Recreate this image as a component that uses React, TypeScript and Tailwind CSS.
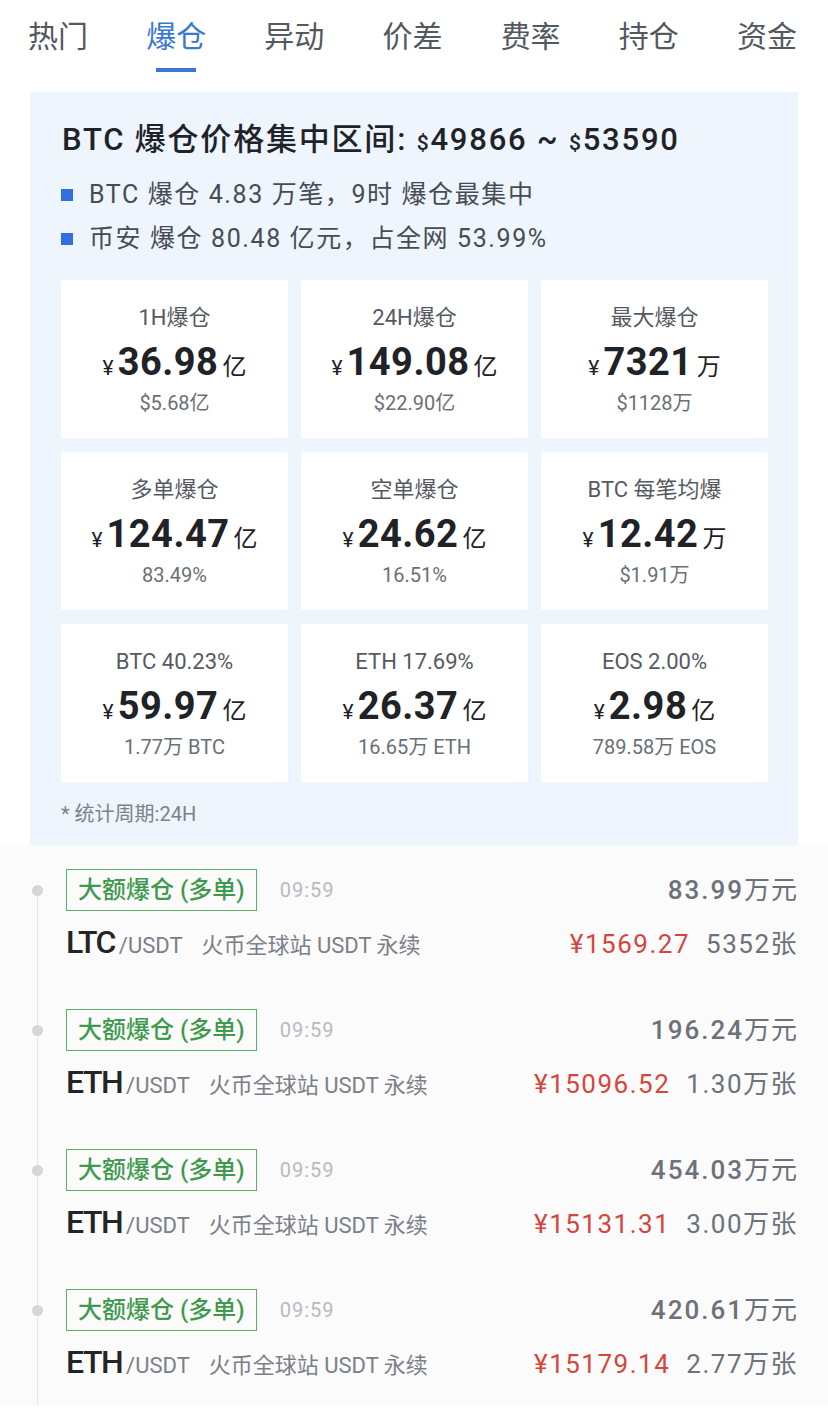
import React from "react";

const FONT = { fontFamily: 'Roboto, "Noto Sans CJK SC", sans-serif' };

const tabs = ["热门", "爆仓", "异动", "价差", "费率", "持仓", "资金"];

type Stat = { label: string; value: string; unit: string; sub: string };

const stats: Stat[] = [
  { label: "1H爆仓", value: "36.98", unit: "亿", sub: "$5.68亿" },
  { label: "24H爆仓", value: "149.08", unit: "亿", sub: "$22.90亿" },
  { label: "最大爆仓", value: "7321", unit: "万", sub: "$1128万" },
  { label: "多单爆仓", value: "124.47", unit: "亿", sub: "83.49%" },
  { label: "空单爆仓", value: "24.62", unit: "亿", sub: "16.51%" },
  { label: "BTC 每笔均爆", value: "12.42", unit: "万", sub: "$1.91万" },
  { label: "BTC 40.23%", value: "59.97", unit: "亿", sub: "1.77万 BTC" },
  { label: "ETH 17.69%", value: "26.37", unit: "亿", sub: "16.65万 ETH" },
  { label: "EOS 2.00%", value: "2.98", unit: "亿", sub: "789.58万 EOS" },
];

const orders = [
  { coin: "LTC", amount: "83.99", price: "¥1569.27", qty: "5352张" },
  { coin: "ETH", amount: "196.24", price: "¥15096.52", qty: "1.30万张" },
  { coin: "ETH", amount: "454.03", price: "¥15131.31", qty: "3.00万张" },
  { coin: "ETH", amount: "420.61", price: "¥15179.14", qty: "2.77万张" },
];

function StatCard({ s }: { s: Stat }) {
  return (
    <div className="h-[158px] bg-white rounded-[2px] flex flex-col items-center pt-[24px]">
      <div className="text-[22px] leading-[28px] text-[#555a62]">{s.label}</div>
      <div className="mt-[8px] h-[44px] flex items-baseline text-[#1f2226]">
        <span className="text-[21px] mr-[4px]">¥</span>
        <span className="text-[38px] leading-[44px] font-bold tracking-[0.5px]">{s.value}</span>
        <span className="text-[24px] ml-[4px]">{s.unit}</span>
      </div>
      <div className="mt-[6px] text-[20px] leading-[26px] text-[#6a6f77]">{s.sub}</div>
    </div>
  );
}

export default function App() {
  return (
    <div className="w-[828px] min-h-[1424px] bg-white overflow-hidden" style={FONT}>
      {/* Tabs */}
      <div className="flex justify-between pl-[28px] pr-[31px] pt-[17px]">
        {tabs.map((t) => {
          const active = t === "爆仓";
          return (
            <div key={t} className="flex flex-col items-center">
              <span
                className={
                  active
                    ? "text-[30px] leading-[40px] text-[#3a78d4]"
                    : "text-[30px] leading-[40px] text-[#54585f]"
                }
              >
                {t}
              </span>
              <span
                className={
                  active
                    ? "mt-[11px] w-[40px] h-[4px] bg-[#3a78d4]"
                    : "mt-[11px] w-[40px] h-[4px]"
                }
              />
            </div>
          );
        })}
      </div>

      {/* Summary */}
      <div className="mx-[30px] mt-[20px] bg-[#eef5fd] pl-[31px] pr-[30px] pt-[28px] pb-[16px]">
        <div className="pl-[1px] text-[31px] leading-[40px] font-medium tracking-[1.8px] text-[#1f2329]">
          BTC 爆仓价格集中区间: <span className="text-[21px]">$</span>49866 ~{" "}
          <span className="text-[21px]">$</span>53590
        </div>
        <div className="mt-[10px]">
          {[
            "BTC 爆仓 4.83 万笔，9时 爆仓最集中",
            "币安 爆仓 80.48 亿元，占全网 53.99%",
          ].map((line) => (
            <div key={line} className="flex items-center h-[44px]">
              <span className="w-[12px] h-[12px] bg-[#2f6fde] mr-[16px]" />
              <span className="text-[25px] tracking-[1.6px] text-[#474c54]">{line}</span>
            </div>
          ))}
        </div>
        <div className="mt-[19px] grid grid-cols-3 gap-x-[13px] gap-y-[14px]">
          {stats.map((s) => (
            <StatCard key={s.label} s={s} />
          ))}
        </div>
        <div className="mt-[17px] text-[20px] leading-[30px] text-[#7d828a]">* 统计周期:24H</div>
      </div>

      {/* Orders */}
      <div className="relative bg-[#fbfbfc]">
        <div className="absolute left-[37px] top-[45px] bottom-0 w-px bg-[#e6e8eb]" />
        {orders.map((o, i) => (
          <div key={i} className="relative pl-[66px] pr-[32px] pt-[24px] pb-[25px]">
            <span className="absolute left-[32px] top-[40px] w-[11px] h-[11px] rounded-full bg-[#d4d6da]" />
            <div className="flex items-center h-[42px]">
              <span className="h-[42px] flex items-center px-[11px] border border-[#5fae6b] text-[24px] font-medium text-[#3f9a4d]">
                大额爆仓 (多单)
              </span>
              <span className="ml-[23px] text-[20px] tracking-[1px] text-[#b6bac0]">09:59</span>
              <span className="ml-auto text-[26px] font-medium tracking-[2px] text-[#6c717a] -mr-[2px]">
                {o.amount}
                <span className="font-normal tracking-[1px]">万元</span>
              </span>
            </div>
            <div className="mt-[13px] flex items-baseline h-[36px]">
              <span className="text-[32px] leading-[36px] font-medium tracking-[-1.5px] text-[#222428]">{o.coin}</span>
              <span className="ml-[4px] text-[22px] leading-[36px] text-[#7b8088]">/USDT</span>
              <span className="ml-[19px] text-[22px] leading-[36px] text-[#7b8088]">火币全球站 USDT 永续</span>
              <span className="ml-auto text-[26px] leading-[36px] tracking-[1.5px] text-[#d6453b]">{o.price}</span>
              <span className="ml-[16px] text-[26px] leading-[36px] tracking-[1.5px] text-[#6c717a] -mr-[2px]">{o.qty}</span>
            </div>
          </div>
        ))}
      </div>
    </div>
  );
}
